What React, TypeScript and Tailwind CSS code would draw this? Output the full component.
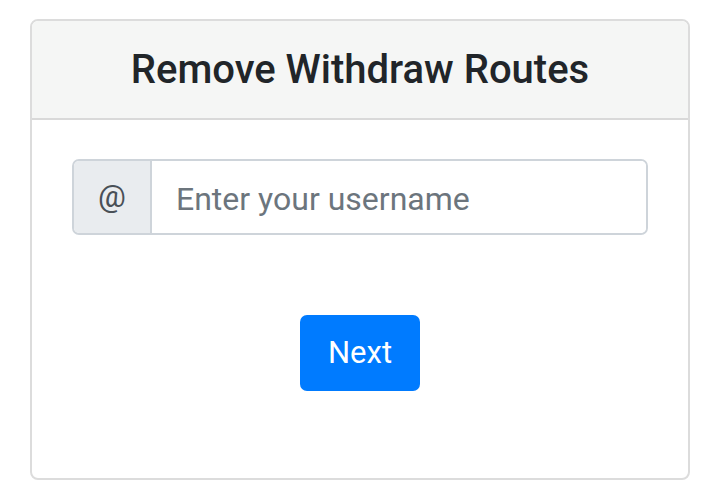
export default function App() {
  return (
    <div className="min-h-screen bg-white pt-[19px] pl-[30px] font-['Roboto',sans-serif]">
      <div className="w-[660px] h-[461px] rounded-[8px] border-2 border-[#dcdcdc] overflow-hidden flex flex-col">
        <div className="h-[99px] bg-[#f5f6f5] border-b-2 border-[#d9d9d9] flex items-center justify-center">
          <h1 className="text-[40px] font-medium text-[#212529] leading-none">Remove Withdraw Routes</h1>
        </div>
        <div className="flex flex-col items-center pt-[39px]">
          <div className="flex w-[576px] h-[76px] rounded-[7px] border-2 border-[#ced4da] overflow-hidden">
            <span className="w-[78px] bg-[#e9ecef] border-r-2 border-[#ced4da] flex items-center justify-center text-[31px] text-[#495057]">@</span>
            <input
              className="flex-1 px-[24px] pt-[3px] text-[32px] text-[#495057] placeholder:text-[#6c757d] outline-none bg-white"
              placeholder="Enter your username"
            />
          </div>
          <button className="mt-[80px] w-[120px] h-[76px] rounded-[7px] bg-[#007bff] text-white text-[31px]">Next</button>
        </div>
      </div>
    </div>
  );
}
